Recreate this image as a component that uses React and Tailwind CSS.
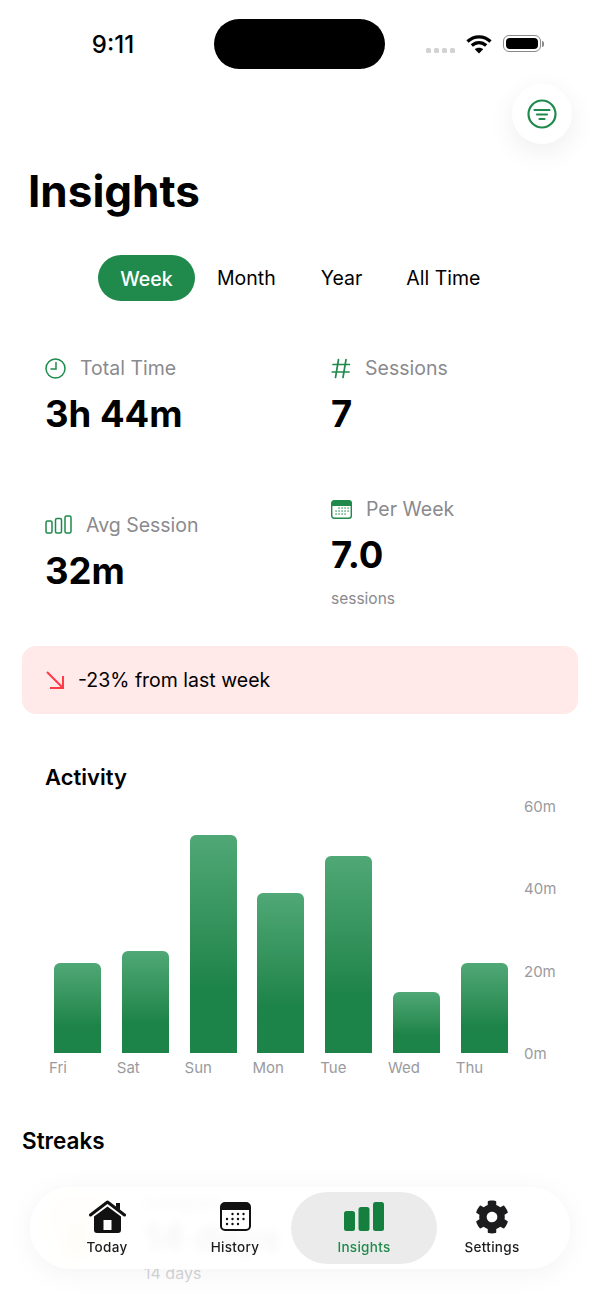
import { FaCog } from 'react-icons/fa'

const GREEN = '#1f8a4c'
const BARS = [
  { day: 'Fri', height: 90 },
  { day: 'Sat', height: 102 },
  { day: 'Sun', height: 218 },
  { day: 'Mon', height: 160 },
  { day: 'Tue', height: 197 },
  { day: 'Wed', height: 61 },
  { day: 'Thu', height: 90 },
]
const TICKS = ['60m', '40m', '20m', '0m']

function StatusBar() {
  return (
    <div className="relative h-[69px]">
      <div className="flex h-full items-start pt-[19px]">
        <span className="w-[214px] pt-[11px] pl-[12px] text-center text-[24px] leading-[30px] font-medium text-black">9:11</span>
        <div className="h-[50px] w-[171px] rounded-full bg-black" />
        <div className="ml-[41px] flex items-start">
          <div className="mt-[29px] flex gap-[3px]">
            {[0, 1, 2, 3].map(i => <span key={i} className="h-[5px] w-[5px] rounded-[1.500px] bg-[#d2d2d2]" />)}
          </div>
          <svg className="mt-[15px] ml-[11px]" width="26" height="20" viewBox="0 0 26 20" fill="none" stroke="#000" strokeWidth="3.2">
            <path d="M1.5 7.5C8 1.2 18 1.2 24.500 7.500" />
            <path d="M5.800 11.500C10 7.600 16 7.600 20.200 11.500" />
            <path d="M13 19.500L8.800 15.300C11 13.300 15 13.300 17.200 15.300Z" fill="#000" stroke="none" />
          </svg>
          <div className="mt-[16px] ml-[11px] flex items-center">
            <div className="h-[17px] w-[38px] rounded-[6px] border border-[#8a8a8a] p-[2px]">
              <div className="h-full w-full rounded-[4px] bg-black" />
            </div>
            <div className="ml-[1px] h-[6px] w-[2px] rounded-r-full bg-[#8a8a8a]" />
          </div>
        </div>
      </div>
    </div>
  )
}

function FilterIcon() {
  return (
    <svg width="30" height="30" viewBox="0 0 30 30" fill="none" stroke={GREEN} strokeWidth="2.200" strokeLinecap="round">
      <circle cx="15" cy="15" r="13.500" />
      <path d="M7.500 11H22.500M10 15.500H20M12.500 20H17.500" />
    </svg>
  )
}

function ClockIcon() {
  return (
    <svg width="21" height="21" viewBox="0 0 21 21" fill="none" stroke={GREEN} strokeWidth="1.500" strokeLinecap="round">
      <circle cx="10.500" cy="10.500" r="9.500" />
      <path d="M11 4.500V11H6" />
    </svg>
  )
}

function HashIcon() {
  return (
    <svg width="20" height="21" viewBox="0 0 19 21" fill="none" stroke={GREEN} strokeWidth="1.700" strokeLinecap="round">
      <path d="M7 1.500L4 19.500M14.500 1.500L11.500 19.500M1.500 6.500H18M0.800 14H17.500" />
    </svg>
  )
}

function BarsOutlineIcon() {
  return (
    <svg width="27" height="19" viewBox="0 0 27 19" fill="none" stroke={GREEN} strokeWidth="1.500">
      <rect x="1" y="6" width="6" height="12" rx="1.500" />
      <rect x="10.500" y="3.500" width="6" height="14.500" rx="1.500" />
      <rect x="20" y="1" width="6" height="17" rx="1.500" />
    </svg>
  )
}

function CalendarGreenIcon() {
  return (
    <svg width="21" height="19" viewBox="0 0 21 19">
      <rect x="0.700" y="0.700" width="19.600" height="17.600" rx="2.500" fill="#fff" stroke={GREEN} strokeWidth="1.400" />
      <path d="M0.700 6V3.200A2.500 2.500 0 0 1 3.200 0.700H17.800A2.500 2.500 0 0 1 20.300 3.200V6Z" fill={GREEN} />
      {[[8, 8], [11, 8], [14, 8], [17, 8], [5, 11], [8, 11], [11, 11], [14, 11], [17, 11], [5, 14], [8, 14], [11, 14], [14, 14]].map(([x, y]) => (
        <rect key={`${x}-${y}`} x={x - 0.600} y={y - 0.600} width="1.300" height="1.300" fill={GREEN} />
      ))}
    </svg>
  )
}

function Stat({ icon, label, value, sub }) {
  return (
    <div className="flex flex-col">
      <div className="flex h-[24px] items-center gap-[14px]">
        {icon}
        <span className="text-[19.500px] leading-[24px] text-[#8a8a8e]">{label}</span>
      </div>
      <div className="mt-[11px] h-[46px] text-[36.500px] leading-[46px] font-bold text-black">{value}</div>
      {sub && <div className="mt-[11px] h-[20px] text-[15.500px] leading-[20px] text-[#8a8a8e]">{sub}</div>}
    </div>
  )
}

function HouseIcon() {
  return (
    <svg width="37" height="33" viewBox="0 0 37 33">
      <path d="M1.500 15L18.500 2L35.500 15" fill="none" stroke="#111" strokeWidth="3" strokeLinecap="round" strokeLinejoin="round" />
      <path d="M27 3H31V10L27 7Z" fill="#111" />
      <path d="M18.500 6.500L32 16.500V30A3 3 0 0 1 29 33H8A3 3 0 0 1 5 30V16.500Z" fill="#111" />
      <rect x="14.500" y="20" width="8" height="10" fill="#fff" />
    </svg>
  )
}

function HistoryIcon() {
  const dots = [[12.500, 12], [18, 12], [23.500, 12], [7, 17], [12.500, 17], [18, 17], [23.500, 17], [7, 22], [12.500, 22], [18, 22]]
  return (
    <svg width="31" height="29" viewBox="0 0 31 29">
      <rect x="1" y="1" width="29" height="27" rx="4" fill="#fff" stroke="#111" strokeWidth="2" />
      <path d="M1 8V5A4 4 0 0 1 5 1H26A4 4 0 0 1 30 5V8Z" fill="#111" />
      {dots.map(([x, y]) => <circle key={`${x}-${y}`} cx={x} cy={y} r="1.200" fill="#111" />)}
    </svg>
  )
}

function InsightsIcon() {
  return (
    <svg width="40" height="29" viewBox="0 0 40 29" fill="#15803d">
      <rect x="0" y="9" width="11" height="20" rx="2.500" />
      <rect x="14.500" y="5" width="11" height="24" rx="2.500" />
      <rect x="29" y="0" width="11" height="29" rx="2.500" />
    </svg>
  )
}

function TabItem({ icon, label, width, active }) {
  return (
    <div className={`flex h-[72px] flex-col items-center justify-end pb-[8px] ${width} ${active ? 'rounded-full bg-[#ebebeb]' : ''}`}>
      <div className="flex h-[33px] items-center">{icon}</div>
      <span className={`mt-[5px] text-[13.500px] leading-[18px] font-medium tracking-[0.3px] ${active ? 'text-[#1f8a4c]' : 'text-[#1c1c1e]'}`}>{label}</span>
    </div>
  )
}

export default function App() {
  return (
    <div className="relative h-[1298px] w-[600px] overflow-hidden bg-white font-['Inter',sans-serif] text-black">
      <StatusBar />

      {/* filter button */}
      <div className="flex justify-end pt-[15px] pr-[28px]">
        <div className="flex h-[60px] w-[60px] items-center justify-center rounded-full bg-white shadow-[0_8px_28px_rgba(0,0,0,0.07)]">
          <FilterIcon />
        </div>
      </div>

      <h1 className="mt-[18px] px-[28px] text-[44px] leading-[58px] font-bold">Insights</h1>

      {/* Range tabs */}
      <div className="mt-[35px] flex h-[46px] items-center pl-[98px] text-[19.500px] leading-[48px]">
        <span className="h-[46px] w-[97px] rounded-full bg-[#1f8a4c] text-center font-medium text-white">Week</span>
        <span className="ml-[22px]">Month</span>
        <span className="ml-[45px]">Year</span>
        <span className="ml-[44px]">All Time</span>
      </div>

      {/* Stats */}
      <div className="mt-[55px] grid grid-cols-[286px_1fr] items-center gap-y-[60px] pl-[45px]">
        <Stat icon={<ClockIcon />} label="Total Time" value="3h 44m" />
        <Stat icon={<HashIcon />} label="Sessions" value="7" />
        <Stat icon={<BarsOutlineIcon />} label="Avg Session" value="32m" />
        <Stat icon={<CalendarGreenIcon />} label="Per Week" value="7.0" sub="sessions" />
      </div>

      {/* Trend */}
      <div className="mx-[22px] mt-[37px] flex h-[68px] items-center gap-[14px] rounded-[14px] bg-[#ffe9e9] pl-[24px]">
        <svg width="18" height="18" viewBox="0 0 18 18" fill="none" stroke="#ff3b47" strokeWidth="2">
          <path d="M1 1L16.500 16.500M17 5V17H4" />
        </svg>
        <span className="pt-[2px] text-[19.500px] text-black">-23% from last week</span>
      </div>

      {/* Activity */}
      <h2 className="mt-[48px] pl-[45px] text-[22px] leading-[30px] font-semibold">Activity</h2>
      <div className="mt-[4px] flex pl-[49px]">
        <div className="w-[475px]">
          <div className="flex h-[257px] items-end">
            {BARS.map(b => (
              <div key={b.day} className="w-[67.800px] pl-[5px]">
                <div
                  className="w-[47px] rounded-t-[6px] bg-linear-to-b from-[#4fa876] to-[#1d8449] to-[70%]"
                  style={{ height: b.height }}
                />
              </div>
            ))}
          </div>
          <div className="flex pt-[5px]">
            {BARS.map(b => (
              <span key={b.day} className="w-[67.800px] text-[15px] leading-[20px] text-[#9a9a9e]">{b.day}</span>
            ))}
          </div>
        </div>
        <div className="mt-[1px] flex h-[267px] flex-col justify-between">
          {TICKS.map(t => (
            <span key={t} className="text-[15px] leading-[20px] text-[#9a9a9e]">{t}</span>
          ))}
        </div>
      </div>

      {/* Streaks, mostly behind the tab bar */}
      <h2 className="mt-[48px] pl-[22px] text-[22.500px] leading-[30px] font-semibold">Streaks</h2>
      <div className="mx-[22px] mt-[33px] flex h-[100px] items-start">
        <div className="mt-[3px] ml-[22px] flex h-[74px] w-[66px] items-center justify-center rounded-[28px] bg-[#fff0c8]">
          <div className="mt-[24px] h-[36px] w-[22px] rounded-full bg-[#ffd27a]" />
        </div>
        <div className="ml-[34px] flex flex-col">
          <span className="text-[20px] leading-[26px] text-[#777]">Longest</span>
          <span className="text-[37px] leading-[46px] font-bold text-[#555]">14 days</span>
          <span className="mt-[2px] text-[16px] leading-[20px] text-[#8a8a8e]">14 days</span>
        </div>
      </div>

      {/* Tab bar over the page */}
      <div className="absolute inset-x-0 bottom-0 bg-linear-to-t from-white/75 to-white/0 px-[30px] pt-[40px] pb-[29px]">
        <div className="flex h-[82px] items-center rounded-full bg-white/90 pl-[21px] shadow-[0_4px_30px_rgba(0,0,0,0.05)] backdrop-blur-[5px]">
          <TabItem icon={<HouseIcon />} label="Today" width="w-[112px]" />
          <TabItem icon={<HistoryIcon />} label="History" width="ml-[16px] w-[112px]" />
          <TabItem icon={<InsightsIcon />} label="Insights" width="w-[146px]" active />
          <TabItem icon={<FaCog size={34} color="#1c1c1e" />} label="Settings" width="w-[110px]" />
        </div>
      </div>
    </div>
  )
}
